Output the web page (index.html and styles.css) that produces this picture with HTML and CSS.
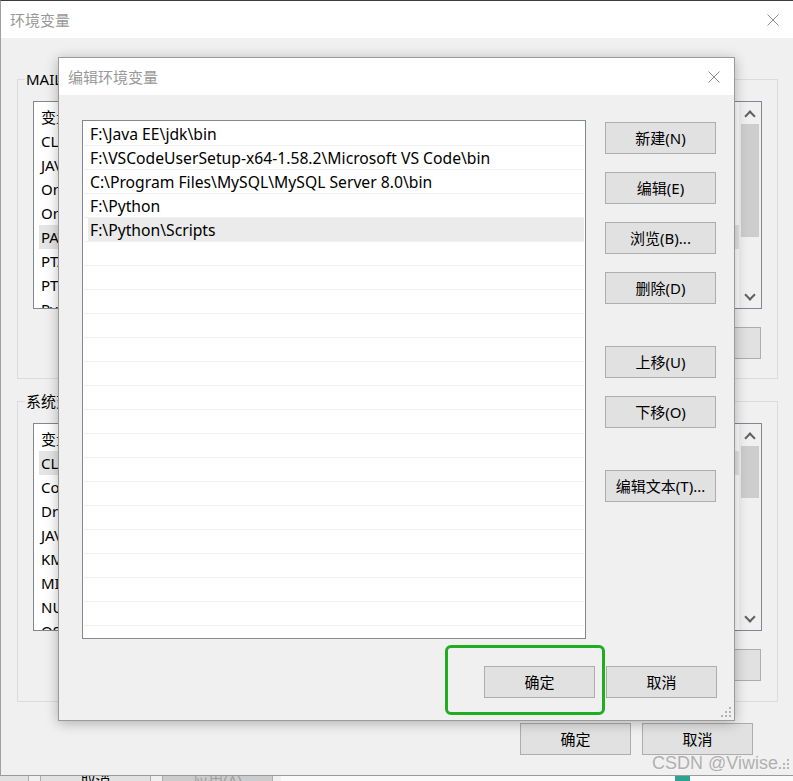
FILE: index.html
```html
<!DOCTYPE html>
<html>
<head lang="zh-CN">
    <meta charset="UTF-8">
    <title>编辑环境变量</title>
    <link rel="stylesheet" href="styles.css">
</head>
<body>
<div id="desk">
    <div class="win">
        <div class="titlebar">
            <span class="title">环境变量</span>
            <svg class="close" width="12" height="12" viewBox="0 0 12 12"><path d="M0.5 0.5L11.5 11.5M11.5 0.5L0.5 11.5"/></svg>
        </div>
        <div class="win-body">
            <div class="group">
                <span class="legend">MAIL 的用户变量(U)</span>
                <div class="list">
                    <div class="list-rows">
                        <div class="row"><span class="name">变量</span><span>值</span></div>
                        <div class="row"><span class="name">CLASSPATH</span><span>.;%JAVA_HOME%\lib</span></div>
                        <div class="row"><span class="name">JAVA_HOME</span><span>F:\Java EE\jdk</span></div>
                        <div class="row"><span class="name">OneDrive</span><span>C:\Users\MAIL\OneDrive</span></div>
                        <div class="row"><span class="name">OneDriveConsumer</span><span>C:\Users\MAIL\OneDrive</span></div>
                        <div class="row sel"><span class="name">PATH</span><span>F:\Java EE\jdk\bin;</span></div>
                        <div class="row"><span class="name">PTA_HOME</span><span>F:\PTA</span></div>
                        <div class="row"><span class="name">PTB_HOME</span><span>F:\PTB</span></div>
                        <div class="row"><span class="name">PyCharm</span><span>F:\PyCharm\bin</span></div>
                    </div>
                    <div class="scroll">
                        <span class="arrow up"></span>
                        <div class="track"><div class="thumb thumb-user"></div></div>
                        <span class="arrow down"></span>
                    </div>
                </div>
                <div class="btns">
                    <span class="btn">新建(N)...</span>
                    <span class="btn">编辑(E)...</span>
                    <span class="btn">删除(D)</span>
                </div>
            </div>
            <div class="group group-sys">
                <span class="legend">系统变量(S)</span>
                <div class="list">
                    <div class="list-rows">
                        <div class="row"><span class="name">变量</span><span>值</span></div>
                        <div class="row sel"><span class="name">CLASSPATH</span><span>.;%JAVA_HOME%\lib</span></div>
                        <div class="row"><span class="name">ComSpec</span><span>C:\Windows\system32\cmd.exe</span></div>
                        <div class="row"><span class="name">DriverData</span><span>C:\Windows\System32\Drivers\DriverData</span></div>
                        <div class="row"><span class="name">JAVA_HOME</span><span>F:\Java EE\jdk</span></div>
                        <div class="row"><span class="name">KMP_DUPLICATE_LIB_OK</span><span>TRUE</span></div>
                        <div class="row"><span class="name">MIC_LD_LIBRARY_PATH</span><span>%INTEL_DEV_REDIST%compiler\lib\mic</span></div>
                        <div class="row"><span class="name">NUMBER_OF_PROCESSORS</span><span>8</span></div>
                        <div class="row"><span class="name">OS</span><span>Windows_NT</span></div>
                    </div>
                    <div class="scroll">
                        <span class="arrow up"></span>
                        <div class="track"><div class="thumb thumb-sys"></div></div>
                        <span class="arrow down"></span>
                    </div>
                </div>
                <div class="btns">
                    <span class="btn">新建(W)...</span>
                    <span class="btn">编辑(I)...</span>
                    <span class="btn">删除(L)</span>
                </div>
            </div>
            <div class="foot">
                <span class="btn">确定</span>
                <span class="btn">取消</span>
            </div>
        </div>
    </div>
    <div class="under">
        <span class="ubtn">确定</span>
        <span class="ubtn">取消</span>
        <span class="ubtn off">应用(A)</span>
        <span class="uicon"></span>
    </div>

    <!-- 编辑环境变量 对话框 -->
    <div class="dlg">
        <div class="titlebar dlg-title">
            <span class="title">编辑环境变量</span>
            <svg class="close" width="12" height="12" viewBox="0 0 12 12"><path d="M0.5 0.5L11.5 11.5M11.5 0.5L0.5 11.5"/></svg>
        </div>
        <div class="dlg-body">
            <div class="dlg-main">
                <div class="paths">
                    <div class="item"><span class="cell">F:\Java EE\jdk\bin</span></div>
                    <div class="item"><span class="cell">F:\VSCodeUserSetup-x64-1.58.2\Microsoft VS Code\bin</span></div>
                    <div class="item"><span class="cell">C:\Program Files\MySQL\MySQL Server 8.0\bin</span></div>
                    <div class="item"><span class="cell">F:\Python</span></div>
                    <div class="item sel"><span class="cell">F:\Python\Scripts</span></div>
                    <div class="item"><span class="cell"></span></div>
                    <div class="item"><span class="cell"></span></div>
                    <div class="item"><span class="cell"></span></div>
                    <div class="item"><span class="cell"></span></div>
                    <div class="item"><span class="cell"></span></div>
                    <div class="item"><span class="cell"></span></div>
                    <div class="item"><span class="cell"></span></div>
                    <div class="item"><span class="cell"></span></div>
                    <div class="item"><span class="cell"></span></div>
                    <div class="item"><span class="cell"></span></div>
                    <div class="item"><span class="cell"></span></div>
                    <div class="item"><span class="cell"></span></div>
                    <div class="item"><span class="cell"></span></div>
                    <div class="item"><span class="cell"></span></div>
                    <div class="item"><span class="cell"></span></div>
                    <div class="item"><span class="cell"></span></div>
                    <div class="item"><span class="cell"></span></div>
                </div>
                <div class="side">
                    <span class="btn">新建(N)</span>
                    <span class="btn">编辑(E)</span>
                    <span class="btn">浏览(B)...</span>
                    <span class="btn">删除(D)</span>
                    <span class="btn gap">上移(U)</span>
                    <span class="btn">下移(O)</span>
                    <span class="btn gap">编辑文本(T)...</span>
                </div>
            </div>
            <div class="foot dlg-foot">
                <span class="btn">确定</span>
                <span class="btn">取消</span>
            </div>
        </div>
        <div class="mark-box"></div>
        <svg class="grip" width="12" height="12" viewBox="0 0 12 12">
            <rect x="9" y="1" width="2" height="2"/>
            <rect x="5" y="5" width="2" height="2"/><rect x="9" y="5" width="2" height="2"/>
            <rect x="1" y="9" width="2" height="2"/><rect x="5" y="9" width="2" height="2"/><rect x="9" y="9" width="2" height="2"/>
        </svg>
    </div>

    <div class="watermark">CSDN @Viwise</div>
    <svg class="grip grip-win" width="12" height="12" viewBox="0 0 12 12">
        <rect x="9" y="1" width="2" height="2"/>
        <rect x="5" y="5" width="2" height="2"/><rect x="9" y="5" width="2" height="2"/>
        <rect x="1" y="9" width="2" height="2"/><rect x="5" y="9" width="2" height="2"/><rect x="9" y="9" width="2" height="2"/>
    </svg>
</div>
</body>
</html>
```

FILE: styles.css
```css
*{
    padding: 0;
    margin: 0;
    box-sizing: border-box;
}
body{
    font-family: "Noto Sans", "Noto Sans CJK SC", sans-serif;
    font-size: 15px;
    color: #000;
    background: #fff;
}
#desk{
    position: relative;
    width: 793px;
    height: 781px;
    overflow: hidden;
}

/* 外层窗口 */
.win{
    width: 793px;
    background: #f0f0f0;
    border-top: 1px solid #3c3c3c;
    border-left: 1px solid #a0a0a0;
    border-bottom: 1px solid #9a9a9a;
}
.titlebar{
    display: flex;
    align-items: center;
    justify-content: space-between;
    height: 37px;
    padding: 0 14px 0 9px;
    background: #fff;
}
.title{
    color: #999;
    line-height: 20px;
}
.close{
    stroke: #8c8c8c;
    stroke-width: 1;
    fill: none;
}
.win-body{
    display: flex;
    flex-direction: column;
    padding-bottom: 20px;
}
.group{
    display: flex;
    flex-direction: column;
    margin: 41px 15px 0 16px;
    border: 1px solid #dcdcdc;
    padding: 0 15px 19px 15px;
}
.group-sys{
    margin-top: 22px;
    padding-bottom: 20px;
}
.legend{
    align-self: flex-start;
    margin: -10px 0 0 -8px;
    padding: 0 1px;
    line-height: 18px;
    background: #f0f0f0;
}
.list{
    display: flex;
    height: 208px;
    margin-top: 13px;
    border: 1px solid #828790;
    background: #fff;
}
.list-rows{
    flex: 1;
    padding: 3px 0 0 5px;
    overflow: hidden;
}
.row{
    display: flex;
    height: 24px;
    line-height: 24px;
    padding-left: 2px;
    white-space: nowrap;
}
.row .name{
    width: 230px;
}
.row.sel{
    background: #e5e5e5;
}
.scroll{
    display: flex;
    flex-direction: column;
    width: 22px;
    padding: 0 1px 0 1px;
    background: #f0f0f0;
}
.arrow{
    position: relative;
    height: 22px;
}
.arrow:after{
    content: '';
    position: absolute;
    left: 6px;
    width: 6px;
    height: 6px;
    border-left: 2px solid #606060;
    border-top: 2px solid #606060;
}
.arrow.up:after{
    top: 10px;
    transform: rotate(45deg);
}
.arrow.down:after{
    top: 5px;
    transform: rotate(-135deg);
}
.track{
    flex: 1;
}
.thumb{
    margin: 0 1px;
    background: #cdcdcd;
}
.thumb-user{
    height: 113px;
}
.thumb-sys{
    height: 52px;
}
.btns{
    display: flex;
    justify-content: flex-end;
    gap: 11px;
    margin: 18px 1px 0 0;
}
.btn{
    display: block;
    width: 111px;
    height: 32px;
    line-height: 30px;
    text-align: center;
    white-space: nowrap;
    background: #e1e1e1;
    border: 1px solid #adadad;
}
.foot{
    display: flex;
    justify-content: flex-end;
    gap: 11px;
    margin: 21px 40px 0 0;
}

/* 后面窗口露出的一条 */
.under{
    display: flex;
    height: 5px;
    overflow: hidden;
    background: linear-gradient(to right, #f0f0f0 281px, #fafafa 281px);
}
.ubtn{
    flex: none;
    width: 111px;
    height: 32px;
    margin: -12px 0 0 11px;
    line-height: 30px;
    text-align: center;
    background: #e1e1e1;
    border: 1px solid #adadad;
    color: #000;
}
.ubtn:first-child{
    margin-left: -82px;
}
.ubtn.off{
    color: #a0a0a0;
    background: #cccccc;
}
.uicon{
    width: 15px;
    margin-left: 402px;
    background: #2aa38f;
}

/* 编辑环境变量 */
.dlg{
    position: absolute;
    left: 58px;
    top: 57px;
    width: 677px;
    height: 664px;
    background: #f0f0f0;
    border: 1px solid #9a9a9a;
    box-shadow: 0 2px 12px rgba(0, 0, 0, 0.28);
}
.dlg-title{
    padding: 0 14px 0 9px;
}
.dlg-body{
    padding: 25px 17px 0 23px;
}
.dlg-main{
    display: flex;
    gap: 19px;
}
.paths{
    width: 504px;
    height: 519px;
    padding: 1px 1px 0 1px;
    border: 1px solid #828790;
    background: #fff;
    overflow: hidden;
    font-size: 15.7px;
}
.item{
    display: flex;
    height: 24px;
    padding-left: 4px;
    border-bottom: 1px solid #f0f0f0;
    line-height: 24px;
    white-space: nowrap;
}
.item .cell{
    flex: 1;
    padding-left: 2px;
}
.item.sel .cell{
    background: #ebebeb;
}
.side{
    display: flex;
    flex-direction: column;
    gap: 18px;
    padding-top: 2px;
}
.side .gap{
    margin-top: 24px;
}
.dlg-foot{
    margin: 27px 0 0 0;
}
.mark-box{
    position: absolute;
    left: 386px;
    top: 587px;
    width: 160px;
    height: 70px;
    border: 3px solid #1fae1f;
    border-radius: 6px;
}
.grip{
    position: absolute;
    right: 2px;
    bottom: 2px;
    fill: #b4b4b4;
}
.grip-win{
    right: 3px;
    bottom: 11px;
}
.watermark{
    position: absolute;
    left: 652px;
    top: 752px;
    font-family: "Liberation Sans", Arial, sans-serif;
    font-size: 18px;
    line-height: 22px;
    color: #b0b0b0;
    text-shadow: 1px 1px 0 #f4f4f4;
}
```
